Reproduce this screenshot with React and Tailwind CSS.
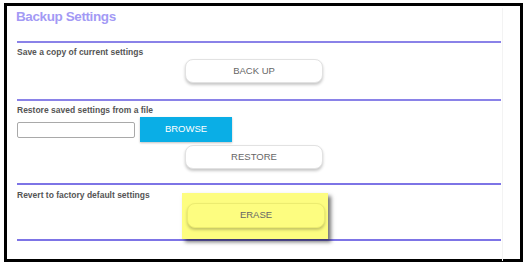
const font = { fontFamily: '"Liberation Sans", Arial, sans-serif' };

function Divider() {
  return <div className="h-[2px] w-[484px] bg-[#8a82e8]" />;
}

function SectionLabel({ children }) {
  return (
    <div className="mt-[3px] h-[12px] text-[8.5px] leading-[12px] font-bold text-[#555555]">
      {children}
    </div>
  );
}

function PillButton({ label, className = "" }) {
  return (
    <button
      className={`flex h-[24px] w-[138px] items-center justify-center rounded-[8px] border border-[#e2e2e2] text-[9.5px] text-[#666666] shadow-[0_2px_3px_rgba(0,0,0,0.22)] ${className}`}
    >
      {label}
    </button>
  );
}

export default function App() {
  return (
    <div className="h-[266px] w-[526px] bg-white pl-[4px] pt-[3px]" style={font}>
      <div className="h-[259px] w-[519px] border-[3px] border-black bg-white">
        <div className="h-full w-[496px] border-r border-[#f3f3f3] pl-[10px]">
          {/* title */}
          <div className="mt-[2px] -ml-[1px] text-[13.5px] leading-[18px] font-bold tracking-[-0.4px] text-[#a39af5]">
            Backup Settings
          </div>

          {/* backup */}
          <div className="mt-[15px]">
            <Divider />
            <SectionLabel>Save a copy of current settings</SectionLabel>
            <PillButton label="BACK UP" className="mt-[1px] ml-[168px] bg-white" />
          </div>

          {/* restore */}
          <div className="mt-[16px]">
            <Divider />
            <SectionLabel>Restore saved settings from a file</SectionLabel>
            <div className="mt-[1px] flex h-[25px] items-center">
              <div className="h-[16px] w-[118px] rounded-[2px] border border-[#a9a9a9] bg-white" />
              <button className="ml-[5px] flex h-[25px] w-[92px] items-center justify-center bg-[#0aaee6] text-[9.5px] text-white shadow-[0_1px_2px_rgba(0,0,0,0.25)]">
                BROWSE
              </button>
            </div>
            <PillButton label="RESTORE" className="mt-[3px] ml-[168px] bg-white" />
          </div>

          {/* erase */}
          <div className="mt-[14px]">
            <div className="h-[2px] w-[484px] bg-[#7d74e6]" />
            <div className="mt-[4px] h-[12px] text-[8.5px] leading-[12px] font-bold text-[#555555]">
              Revert to factory default settings
            </div>
            <div className="relative z-10 -mt-[8px] ml-[165px] h-[46px] w-[146px] bg-[#fdfd80] pl-[5px] pt-[10px] shadow-[3px_3px_4px_rgba(0,0,0,0.55)]">
              <PillButton
                label="ERASE"
                className="h-[25px] w-[137px] border-[#ecec70] bg-[#fdfd80] shadow-[0_2px_3px_rgba(0,0,0,0.18)]"
              />
            </div>
            <div className="h-[2px] w-[484px] bg-[#7d74e6]" />
          </div>
        </div>
      </div>
    </div>
  );
}
